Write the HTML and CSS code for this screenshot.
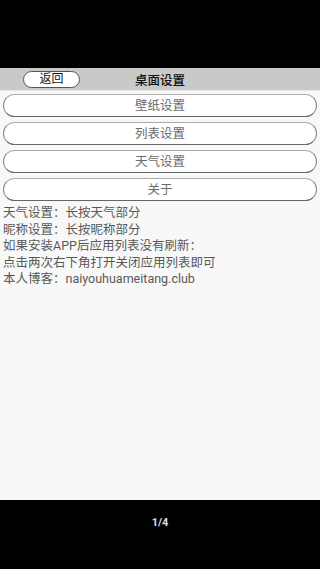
FILE: index.html
```html
<!DOCTYPE html>
<html>
<head>
<meta charset="utf-8">
<link rel="stylesheet" href="styles.css">
</head>
<body>
<div class="screen">
  <div class="topbar"></div>
  <div class="content">
    <div class="header">
      <div class="back">返回</div>
      <div class="title">桌面设置</div>
    </div>
    <div class="buttons">
      <div class="btn">壁纸设置</div>
      <div class="btn">列表设置</div>
      <div class="btn">天气设置</div>
      <div class="btn">关于</div>
    </div>
    <div class="info">
      <p>天气设置：长按天气部分</p>
      <p>昵称设置：长按昵称部分</p>
      <p>如果安装APP后应用列表没有刷新：</p>
      <p>点击两次右下角打开关闭应用列表即可</p>
      <p>本人博客：naiyouhuameitang.club</p>
    </div>
  </div>
  <div class="bottombar"><span class="pager">1/4</span></div>
</div>
</body>
</html>
```
FILE: styles.css
```css
* { box-sizing: border-box; margin: 0; padding: 0; }
html, body { width: 320px; height: 569px; background: #000; overflow: hidden; }
body { font-family: "Roboto", "Noto Sans CJK SC", sans-serif; }
.screen { display: flex; flex-direction: column; height: 569px; }
.topbar { height: 68px; background: #000; flex: none; }
.content { height: 432px; background: #f8f8f8; flex: none; display: flex; flex-direction: column; }
.header { height: 23px; background: #c9c9c9; position: relative; display: flex; align-items: center; justify-content: center; border-bottom: 1px solid #e6e6e6; }
.back { position: absolute; left: 23px; top: 3px; width: 57px; height: 17px; background: #fff; border: 1px solid #555; border-radius: 9px; font-size: 12px; line-height: 15px; text-align: center; color: #111; }
.title { font-size: 12.5px; color: #111; font-weight: 500; }
.buttons { display: flex; flex-direction: column; gap: 5px; padding: 3px 3px 0; }
.btn { height: 23px; background: #fff; border: 1px solid #8a8a8a; border-bottom-color: #666; border-top-color: #aaa; border-radius: 12px; font-size: 12.5px; line-height: 21px; text-align: center; color: #6a6a6a; }
.info { padding: 4px 3px 0; color: #585858; font-size: 12.5px; line-height: 16.5px; }
.bottombar { flex: 1; background: #000; display: flex; justify-content: center; padding-top: 16px; }
.pager { color: #ddd; font-size: 11px; font-weight: bold; height: 14px; }
```
